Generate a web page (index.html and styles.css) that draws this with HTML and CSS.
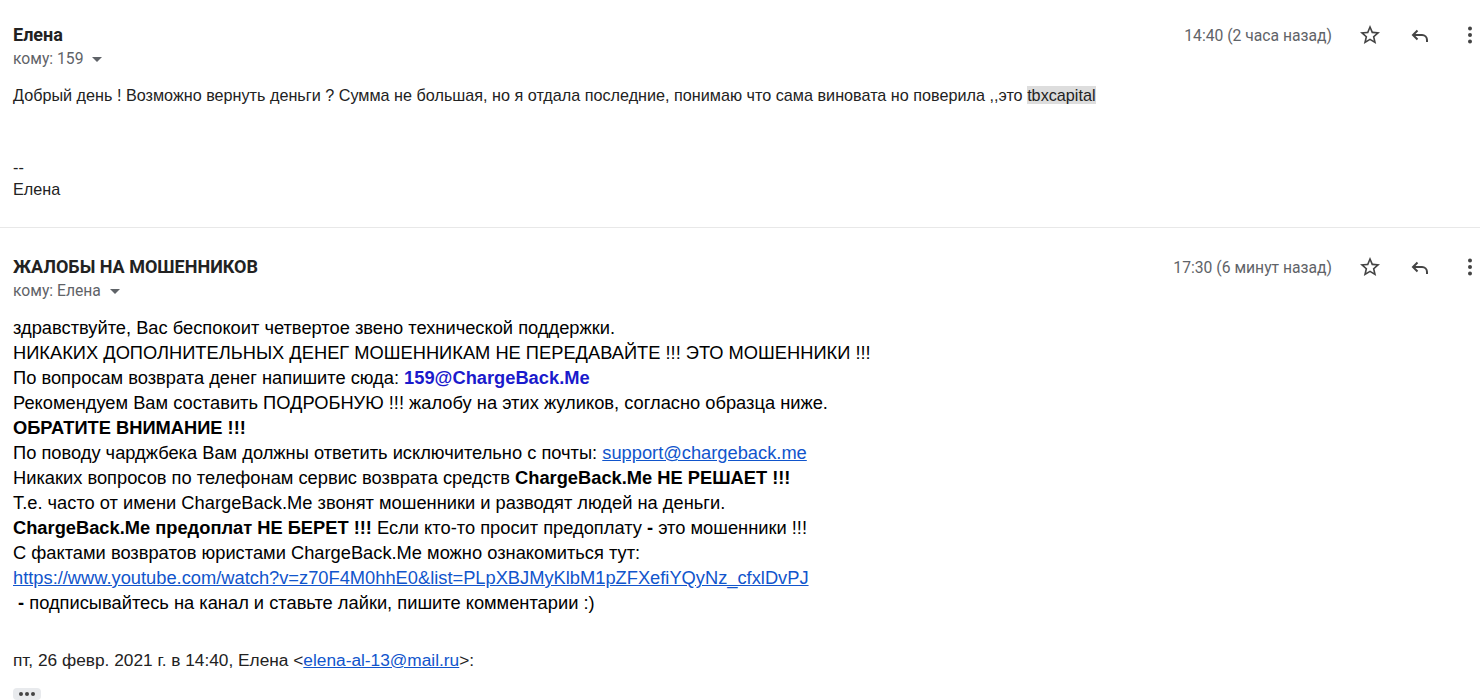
FILE: index.html
```html
<!DOCTYPE html>
<html lang="ru">
<head>
<meta charset="utf-8">
<link rel="stylesheet" href="styles.css">
</head>
<body>
<div class="msg first">
  <div class="head">
    <div class="who">
      <div class="name">Елена</div>
      <div class="to">кому: 159 <span class="caret"></span></div>
    </div>
    <div class="meta">
      <span class="time">14:40 (2 часа назад)</span>
      <span class="icon star"><svg width="24" height="24" viewBox="0 0 24 24"><path fill="#444" d="M22 9.24l-7.19-.62L12 2 9.19 8.63 2 9.24l5.46 4.73L5.82 21 12 17.27 18.18 21l-1.63-7.03L22 9.24zM12 15.4l-3.76 2.27 1-4.28-3.32-2.88 4.38-.38L12 6.1l1.71 4.04 4.38.38-3.32 2.88 1 4.28L12 15.4z"/></svg></span>
      <span class="icon reply"><svg width="24" height="24" viewBox="0 0 24 24"><path d="M9.5 7.5 5 12l4.5 4.5M5.5 12H14a5 5 0 0 1 5 5v2" fill="none" stroke="#444" stroke-width="2"/></svg></span>
      <span class="icon more"><svg width="24" height="24" viewBox="0 0 24 24"><circle cx="12" cy="5.5" r="2" fill="#444"/><circle cx="12" cy="12" r="2" fill="#444"/><circle cx="12" cy="18.5" r="2" fill="#444"/></svg></span>
    </div>
  </div>
  <div class="body1">
    <p>Добрый день ! Возможно вернуть деньги ? Сумма не большая, но я отдала последние, понимаю что сама виновата но поверила ,,это <span class="hl">tbxcapital</span></p>
    <p class="sig">--<br>Елена</p>
  </div>
</div>
<div class="msg second">
  <div class="head">
    <div class="who">
      <div class="name">ЖАЛОБЫ НА МОШЕННИКОВ</div>
      <div class="to">кому: Елена <span class="caret"></span></div>
    </div>
    <div class="meta">
      <span class="time">17:30 (6 минут назад)</span>
      <span class="icon star"><svg width="24" height="24" viewBox="0 0 24 24"><path fill="#444" d="M22 9.24l-7.19-.62L12 2 9.19 8.63 2 9.24l5.46 4.73L5.82 21 12 17.27 18.18 21l-1.63-7.03L22 9.24zM12 15.4l-3.76 2.27 1-4.28-3.32-2.88 4.38-.38L12 6.1l1.71 4.04 4.38.38-3.32 2.88 1 4.28L12 15.4z"/></svg></span>
      <span class="icon reply"><svg width="24" height="24" viewBox="0 0 24 24"><path d="M9.5 7.5 5 12l4.5 4.5M5.5 12H14a5 5 0 0 1 5 5v2" fill="none" stroke="#444" stroke-width="2"/></svg></span>
      <span class="icon more"><svg width="24" height="24" viewBox="0 0 24 24"><circle cx="12" cy="5.5" r="2" fill="#444"/><circle cx="12" cy="12" r="2" fill="#444"/><circle cx="12" cy="18.5" r="2" fill="#444"/></svg></span>
    </div>
  </div>
  <div class="body2">
    <div>здравствуйте, Вас беспокоит четвертое звено технической поддержки.</div>
    <div>НИКАКИХ ДОПОЛНИТЕЛЬНЫХ ДЕНЕГ МОШЕННИКАМ НЕ ПЕРЕДАВАЙТЕ !!! ЭТО МОШЕННИКИ !!!</div>
    <div>По вопросам возврата денег напишите сюда: <b class="blue">159@ChargeBack.Me</b></div>
    <div>Рекомендуем Вам составить ПОДРОБНУЮ !!! жалобу на этих жуликов, согласно образца ниже.</div>
    <div><b>ОБРАТИТЕ ВНИМАНИЕ !!!</b></div>
    <div>По поводу чарджбека Вам должны ответить исключительно с почты: <a href="#">support@chargeback.me</a></div>
    <div>Никаких вопросов по телефонам сервис возврата средств <b>ChargeBack.Me НЕ РЕШАЕТ !!!</b></div>
    <div>Т.е. часто от имени ChargeBack.Me звонят мошенники и разводят людей на деньги.</div>
    <div><b>ChargeBack.Me предоплат НЕ БЕРЕТ !!!</b> Если кто-то просит предоплату <b>-</b> это мошенники !!!</div>
    <div>С фактами возвратов юристами ChargeBack.Me можно ознакомиться тут:</div>
    <div><a href="#">https://www.youtube.com/watch?v=z70F4M0hhE0&amp;list=PLpXBJMyKlbM1pZFXefiYQyNz_cfxlDvPJ</a></div>
    <div>&nbsp;<b>-</b> подписывайтесь на канал и ставьте лайки, пишите комментарии :)</div>
  </div>
  <div class="quote">пт, 26 февр. 2021 г. в 14:40, Елена &lt;<a href="#">elena-al-13@mail.ru</a>&gt;:</div>
  <div class="dots"><span></span><span></span><span></span></div>
</div>
</body>
</html>
```
FILE: styles.css
```css
html, body {
  margin: 0;
  padding: 0;
  background: #fff;
}
body {
  width: 1480px;
  height: 700px;
  overflow: hidden;
  font-family: Roboto, "Liberation Sans", Arial, sans-serif;
  color: #222;
}
.msg {
  padding: 0 0 0 13px;
}
.msg.first {
  padding-top: 23px;
  border-bottom: 1px solid #e8e8e8;
  height: 204px;
}
.msg.second {
  padding-top: 27px;
}
.head {
  display: flex;
  justify-content: space-between;
  align-items: flex-start;
}
.name {
  font-size: 18px;
  font-weight: 700;
  line-height: 24px;
  color: #222;
}
.to {
  font-size: 15.7px;
  color: #5f6368;
  line-height: 24px;
  display: flex;
  align-items: center;
  gap: 7px;
}
.caret {
  display: inline-block;
  width: 0;
  height: 0;
  border-left: 5px solid transparent;
  border-right: 5px solid transparent;
  border-top: 5px solid #5f6368;
  margin-left: 2px;
}
.meta {
  display: flex;
  align-items: center;
  height: 24px;
}
.time {
  font-size: 15.7px;
  color: #5f6368;
  margin-right: 26px;
}
.icon {
  width: 24px;
  height: 24px;
  display: flex;
  align-items: center;
  justify-content: center;
}
.icon.star { margin-right: 26px; }
.icon.reply { margin-right: 26px; }
.icon.more { margin-right: -2px; }
.body1 {
  font-family: "Liberation Sans", Arial, sans-serif;
  font-size: 16.2px;
  color: #222;
}
.body1 p {
  margin: 0;
}
.body1 p:first-child {
  margin-top: 13px;
  line-height: 22px;
}
.hl {
  background: #ddd;
}
.sig {
  margin-top: 50px !important;
  line-height: 22px;
}
.body2 {
  margin-top: 12px;
  font-family: "Liberation Sans", Arial, sans-serif;
  font-size: 18.3px;
  line-height: 25px;
  color: #000;
}
.body2 b {
  font-weight: 700;
}
.blue {
  color: #1a1acc;
}
a {
  color: #1155cc;
  text-decoration: underline;
}
.quote {
  margin-top: 35px;
  font-family: "Liberation Sans", Arial, sans-serif;
  font-size: 17.3px;
  color: #222;
  line-height: 20px;
}
.dots {
  margin-top: 18px;
  width: 28px;
  height: 12px;
  background: #e8eaed;
  border-radius: 4px;
  display: flex;
  align-items: center;
  justify-content: center;
  gap: 2px;
}
.dots span {
  width: 4px;
  height: 4px;
  border-radius: 50%;
  background: #444;
}
```
